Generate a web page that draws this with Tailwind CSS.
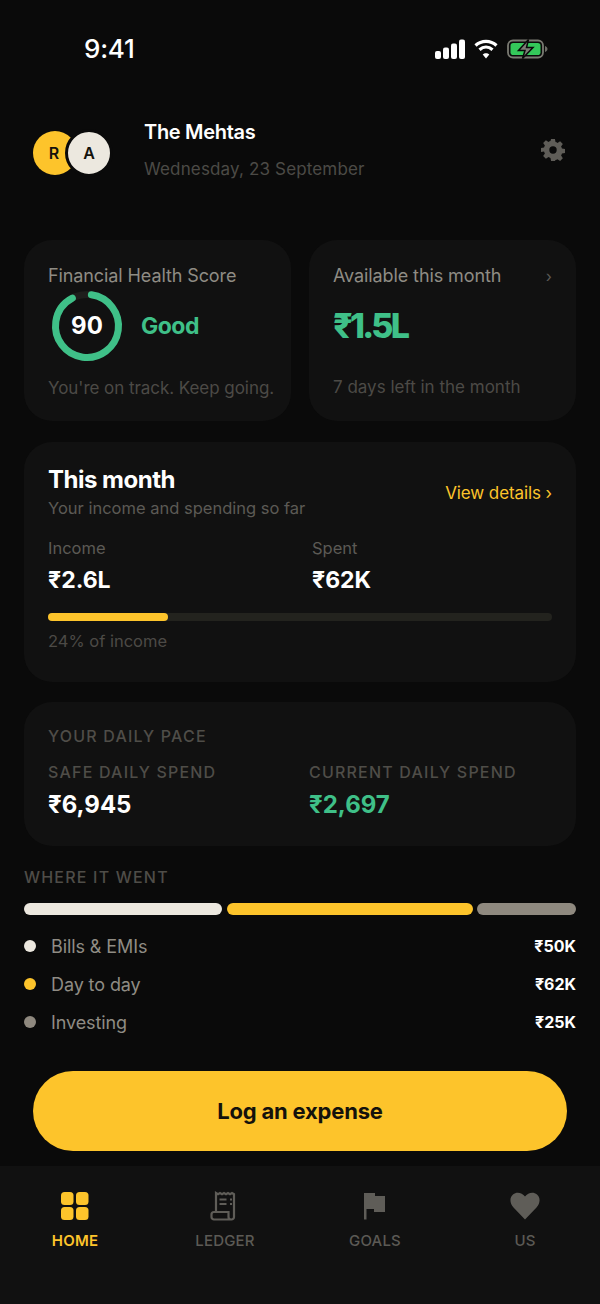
<!DOCTYPE html>
<html><head><meta charset="utf-8">
<script src="https://cdn.jsdelivr.net/npm/@tailwindcss/browser@4"></script>
</head>
<body class="m-0">
<div class="w-[600px] h-[1304px] bg-[#0a0a0a] flex flex-col overflow-hidden font-['Inter',sans-serif] text-white">
  <!-- status bar -->
  <div class="h-[96px] shrink-0 flex justify-between pl-[84px] pr-[52px] pt-[33px]">
    <div class="font-['Inter',sans-serif] text-[26px] leading-[32px] font-medium tracking-[-0.2px] text-white">9:41</div>
    <div class="flex items-center gap-[9px] h-[32px]">
      <svg width="30" height="20" viewBox="0 0 30 20" fill="#fff"><rect x="0" y="12" width="6" height="8" rx="2"/><rect x="8" y="8.5" width="6" height="11.5" rx="2"/><rect x="16" y="4.5" width="6" height="15.5" rx="2"/><rect x="24" y="0.5" width="6" height="19.5" rx="2"/></svg>
      <svg width="24" height="20" viewBox="0 0 24 20" fill="none" stroke="#fff" stroke-width="3.2"><path d="M1.5 6.5C7.5 1 16.5 1 22.500 6.500"/><path d="M5.500 10.800C9.500 7.300 14.500 7.300 18.500 10.800"/><path d="M12 19.500L8.700 15.500C10.500 13.700 13.500 13.700 15.300 15.500Z" fill="#fff" stroke="none"/></svg>
      <svg width="41" height="20" viewBox="0 0 41 20"><rect x="1" y="1.500" width="35" height="17" rx="5" fill="none" stroke="#7a7a72" stroke-width="1.800"/><rect x="3.500" y="4" width="30" height="12" rx="2.800" fill="#34c85a"/><path d="M38 7v6c1.500-.5 2.500-1.700 2.500-3S39.500 7.500 38 7Z" fill="#6d6d66"/><path d="M21.500 0.500L11.500 11.500H18L15.500 19.500L26 8.500H19.500Z" fill="#7d7d76" stroke="#0a0a0a" stroke-width="1.500"/></svg>
    </div>
  </div>
  <!-- header -->
  <div class="h-[114px] shrink-0 flex items-start pl-[33px] pr-[34px] pt-[24px]">
    <div class="relative w-[78px] h-[44px] mt-[11px] shrink-0">
      <div class="absolute left-0 top-0 w-[44px] h-[44px] rounded-full bg-[#fdc42b] flex items-center justify-center text-[16px] font-semibold text-[#14120c] pr-[2px]">R</div>
      <div class="absolute left-[32px] top-[-2px] w-[48px] h-[48px] rounded-full bg-[#ece8df] border-[3px] border-[#0a0a0a] flex items-center justify-center text-[16px] font-semibold text-[#14120c]">A</div>
    </div>
    <div class="ml-[33px] flex-1">
      <div class="text-[20px] leading-[24px] font-semibold tracking-[-0.3px] text-white">The Mehtas</div>
      <div class="text-[17px] leading-[24px] mt-[13px] text-[#4c4a46] tracking-[0.15px]">Wednesday, 23 September</div>
    </div>
    <svg class="mt-[17px]" width="26" height="26" viewBox="0 0 24 24" fill="#5f5d58"><path fill-rule="evenodd" d="M10 0.800h4l.6 3.100c.7.200 1.400.500 2 .9l2.700-1.800 2.800 2.800-1.800 2.700c.4.600.7 1.300.9 2l3.100.6v4l-3.100.6c-.2.700-.5 1.400-.9 2l1.800 2.700-2.800 2.800-2.700-1.800c-.6.400-1.300.7-2 .9L14 23.200h-4l-.6-3.100c-.7-.2-1.400-.5-2-.9l-2.700 1.800-2.800-2.800 1.800-2.700c-.4-.6-.7-1.300-.9-2L-.3 14v-4l3.100-.6c.2-.7.5-1.400.9-2L1.900 4.700l2.800-2.800 2.700 1.800c.6-.4 1.300-.7 2-.9ZM12 8.200a3.800 3.800 0 1 0 0 7.600a3.800 3.800 0 0 0 0-7.600Z" transform="translate(1.200 1.200) scale(.9)"/></svg>
  </div>
  <!-- content -->
  <div class="px-[24px] pt-[30px] flex flex-col">
    <div class="grid grid-cols-2 gap-[18px]">
      <div class="h-[181px] rounded-[28px] bg-[#111111] px-[24px] pt-[24px]">
        <div class="text-[18px] leading-[24px] text-[#8f8c84] tracking-[-0.1px] whitespace-nowrap">Financial Health Score</div>
        <div class="flex items-center mt-[1px] h-[74px]">
          <div class="relative w-[74px] h-[74px] ml-[2px] shrink-0">
            <svg width="74" height="74" viewBox="0 0 74 74"><circle cx="37" cy="37" r="31.500" fill="none" stroke="#1e1e1c" stroke-width="7"/><circle cx="37" cy="37" r="31.500" fill="none" stroke="#3fc088" stroke-width="7" stroke-linecap="round" stroke-dasharray="178 198" transform="rotate(-90 37 37) rotate(8 37 37)"/></svg>
            <div class="absolute inset-0 flex items-center justify-center text-[24px] font-bold text-white">90</div>
          </div>
          <div class="ml-[17px] text-[23px] font-bold tracking-[-0.5px] text-[#3fc088]">Good</div>
        </div>
        <div class="mt-[13px] text-[17px] leading-[24px] text-[#4c4a46] whitespace-nowrap tracking-[-0.05px]">You're on track. Keep going.</div>
      </div>
      <div class="h-[181px] rounded-[28px] bg-[#111111] px-[24px] pt-[24px]">
        <div class="flex justify-between items-center"><span class="text-[18px] leading-[24px] text-[#8f8c84] tracking-[-0.1px] whitespace-nowrap">Available this month</span><span class="text-[16px] text-[#5c5a55]">›</span></div>
        <div class="mt-[13px] h-[50px] leading-[50px] text-[34px] font-extrabold text-[#3fc088] tracking-[-2.8px]">₹1.5L</div>
        <div class="mt-[24px] text-[17px] leading-[24px] text-[#4c4a46] whitespace-nowrap">7 days left in the month</div>
      </div>
    </div>
    <div class="mt-[21px] h-[240px] rounded-[28px] bg-[#111111] px-[24px] pt-[24px]">
      <div class="flex justify-between">
        <div>
          <div class="text-[24px] leading-[28px] font-bold tracking-[-0.5px] text-white">This month</div>
          <div class="text-[16.500px] leading-[22px] mt-[3px] text-[#5c5a55]">Your income and spending so far</div>
        </div>
        <div class="text-[17px] text-[#fdc42b] mt-[15px] leading-[24px] tracking-[-0.1px]">View details ›</div>
      </div>
      <div class="grid grid-cols-[264px_1fr] mt-[18px]">
        <div><div class="text-[16.500px] leading-[22px] text-[#5c5a55]">Income</div><div class="mt-[6px] text-[23px] leading-[30px] font-bold">₹2.6L</div></div>
        <div><div class="text-[16.500px] leading-[22px] text-[#5c5a55]">Spent</div><div class="mt-[6px] text-[23px] leading-[30px] font-bold">₹62K</div></div>
      </div>
      <div class="mt-[18px] h-[8px] rounded-full bg-[#23231e]"><div class="h-full w-[120px] rounded-full bg-[#fdc42b]"></div></div>
      <div class="mt-[8px] text-[16.500px] leading-[24px] text-[#4c4a46]">24% of income</div>
    </div>
    <div class="mt-[20px] h-[144px] rounded-[28px] bg-[#111111] px-[24px] pt-[23px]">
      <div class="text-[16px] leading-[22px] tracking-[1.2px] text-[#4f4d48] font-medium">YOUR DAILY PACE</div>
      <div class="grid grid-cols-[261px_1fr] mt-[14px]">
        <div><div class="text-[16px] leading-[22px] tracking-[1.2px] text-[#4f4d48] font-medium whitespace-nowrap">SAFE DAILY SPEND</div><div class="mt-[7px] text-[24px] leading-[30px] font-bold">₹6,945</div></div>
        <div><div class="text-[16px] leading-[22px] tracking-[1.2px] text-[#4f4d48] font-medium whitespace-nowrap">CURRENT DAILY SPEND</div><div class="mt-[7px] text-[24px] leading-[30px] font-bold text-[#3fc088]">₹2,697</div></div>
      </div>
    </div>
    <div class="mt-[20px] text-[16px] leading-[22px] tracking-[1.2px] text-[#4f4d48] font-medium">WHERE IT WENT</div>
    <div class="mt-[15px] flex gap-[4.500px] h-[12px]">
      <div class="w-[198px] rounded-full bg-[#ece8df]"></div>
      <div class="w-[246px] rounded-full bg-[#fdc42b]"></div>
      <div class="flex-1 rounded-full bg-[#8f897f]"></div>
    </div>
    <div class="mt-[19px] flex flex-col gap-[14px]">
      <div class="flex items-center h-[24px]"><span class="w-[12px] h-[12px] rounded-full bg-[#ece8df]"></span><span class="ml-[15px] flex-1 text-[18px] text-[#8f8c84] tracking-[-0.1px]">Bills &amp; EMIs</span><span class="text-[16px] font-bold text-white">₹50K</span></div>
      <div class="flex items-center h-[24px]"><span class="w-[12px] h-[12px] rounded-full bg-[#fdc42b]"></span><span class="ml-[15px] flex-1 text-[18px] text-[#8f8c84] tracking-[-0.1px]">Day to day</span><span class="text-[16px] font-bold text-white">₹62K</span></div>
      <div class="flex items-center h-[24px]"><span class="w-[12px] h-[12px] rounded-full bg-[#8f897f]"></span><span class="ml-[15px] flex-1 text-[18px] text-[#8f8c84] tracking-[-0.1px]">Investing</span><span class="text-[16px] font-bold text-white">₹25K</span></div>
    </div>
    <div class="mt-[37px] mx-[9px] h-[80px] rounded-full bg-[#fdc42b] flex items-center justify-center text-[22px] font-bold text-[#14120c] tracking-[-0.2px]">Log an expense</div>
  </div>
  <!-- tab bar -->
  <div class="mt-[15px] flex-1 bg-[#111111] grid grid-cols-4 px-0 pt-[25px]">
    <div class="flex flex-col items-center">
      <svg width="30" height="30" viewBox="0 0 30 30" fill="#fdc42b"><rect x="1" y="1" width="12.500" height="13" rx="3.500"/><rect x="16" y="1" width="12.500" height="13" rx="3.500"/><rect x="1" y="16" width="12.500" height="13" rx="3.500"/><rect x="16" y="16" width="12.500" height="13" rx="3.500"/></svg>
      <span class="mt-[10px] text-[15px] leading-[20px] font-semibold tracking-[0.2px] text-[#fdc42b]">HOME</span>
    </div>
    <div class="flex flex-col items-center">
      <svg width="30" height="30" viewBox="0 0 30 30" fill="none" stroke="#5f5d58" stroke-width="2.200"><path d="M6 21V2l2 1.200 2-1.200 2 1.200 2-1.200 2 1.200 2-1.200 2 1.200 2-1.200 2 1.200V26a2.500 2.500 0 0 1-2.500 2.500H4A2.500 2.500 0 0 1 1.500 26v-2.500a2.500 2.500 0 0 1 2.500-2.500h14.500V26a2.500 2.500 0 0 0 2.500 2.500"/><path d="M9.500 8.500h7M9.500 13h7M20 8.500h2M20 13h2"/></svg>
      <span class="mt-[10px] text-[15px] leading-[20px] font-medium tracking-[0.2px] text-[#5c5a55]">LEDGER</span>
    </div>
    <div class="flex flex-col items-center">
      <svg width="30" height="30" viewBox="0 0 30 30" fill="#5f5d58"><path d="M4 2h11v3h10v16H14v-3H6.500v10.500H4Z"/></svg>
      <span class="mt-[10px] text-[15px] leading-[20px] font-medium tracking-[0.2px] text-[#5c5a55]">GOALS</span>
    </div>
    <div class="flex flex-col items-center">
      <svg width="30" height="30" viewBox="0 0 30 30" fill="#5f5d58"><path d="M15 28.500 3.500 16.500C-.5 12-.5 6.500 3 3.500 6.500.5 12 1.500 15 5.500 18 1.500 23.500.5 27 3.500c3.500 3 3.500 8.500-.5 13Z"/></svg>
      <span class="mt-[10px] text-[15px] leading-[20px] font-medium tracking-[0.2px] text-[#5c5a55]">US</span>
    </div>
  </div>
</div>
</body></html>
